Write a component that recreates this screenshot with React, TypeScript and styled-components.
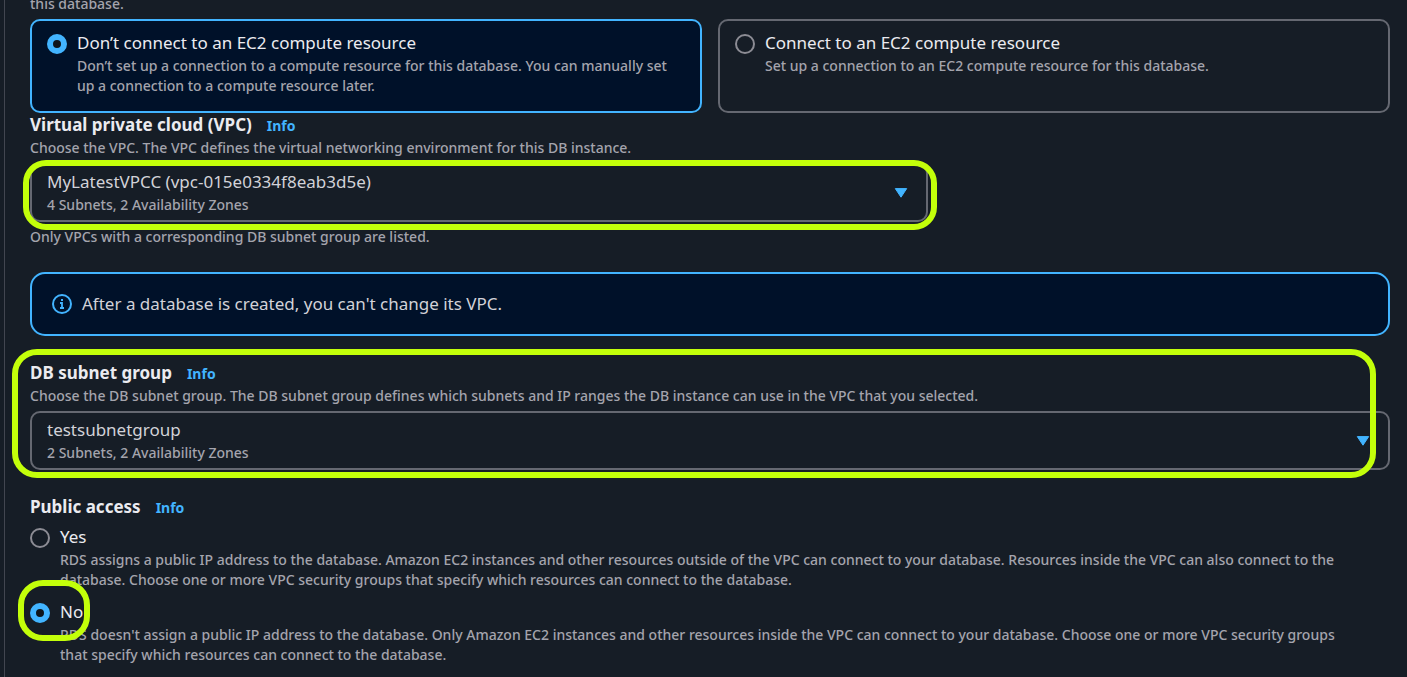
import React, { ReactNode } from "react";
import styled, { createGlobalStyle, css } from "styled-components";

const GlobalStyle = createGlobalStyle`
  *, *::before, *::after { box-sizing: border-box; }
  html, body { margin: 0; min-height: 100%; background: #161d26; }
  body {
    overflow-x: hidden;
    color: #d2d2d8;
    font-family: "Noto Sans", "Open Sans", sans-serif;
    font-size: 17px;
    line-height: 23px;
  }
`;

const Page = styled.div`
  min-height: 100vh;
  padding-left: 4px;
  overflow: hidden;
`;

const Panel = styled.main`
  min-height: 100vh;
  border-left: 1px solid #424650;
  padding: 0 17px 12px 25px;
`;

const Form = styled.form`
  display: flex;
  flex-direction: column;
  gap: 25px;
  margin-top: -6px;
`;

const Note = styled.p`
  display: block;
  margin: 0;
  color: #a4a4ad;
  font-size: 14px;
  font-weight: 500;
  line-height: 20px;
`;

const Constraint = styled(Note)`
  margin-top: 5px;
`;

const Field = styled.section`
  position: relative;
  display: flex;
  flex-direction: column;
`;

const FieldHead = styled.div`
  display: flex;
  align-items: baseline;
  gap: 15px;
  margin-bottom: 2px;
`;

const FieldLabel = styled.label`
  color: #ebebf0;
  font-weight: 700;
`;

const InfoLink = styled.a`
  color: #42b4ff;
  font-size: 14px;
  line-height: 20px;
  font-weight: 700;
  text-decoration: none;
`;

const Tiles = styled.div`
  display: grid;
  grid-template-columns: 1fr 1fr;
  gap: 16px;
  margin-top: 5px;
`;

const Choice = styled.label`
  position: relative;
  display: grid;
  grid-template-columns: 20px 1fr;
  column-gap: 10px;
  align-items: start;
`;

const Tile = styled(Choice)<{ $selected?: boolean }>`
  padding: 10px 15px 15px;
  border: 2px solid ${(p) => (p.$selected ? "#42b4ff" : "#656871")};
  border-radius: 10px;
  background: ${(p) => (p.$selected ? "#001129" : "transparent")};
`;

const ChoiceTitle = styled.span`
  display: block;
  margin-bottom: 2px;
  color: #ebebf0;
`;

const Radio = styled.input`
  appearance: none;
  width: 20px;
  height: 20px;
  margin: 3px 0 0;
  border: 2px solid #8c8c94;
  border-radius: 50%;
  background: transparent;
  &:checked {
    border: 6px solid #42b4ff;
    background: #0f141a;
  }
`;

const SelectBox = styled.div<{ $narrow?: boolean }>`
  position: relative;
  display: grid;
  align-items: center;
  width: ${(p) => (p.$narrow ? "66%" : "100%")};
  margin-top: 5px;
`;

const cell = css`
  grid-area: 1 / 1;
`;

const Select = styled.select`
  ${cell}
  appearance: none;
  width: 100%;
  padding: 5px 45px 27px 15px;
  border: 2px solid #656871;
  border-radius: 10px;
  background: transparent;
  color: inherit;
  font: inherit;
  option { background: #161d26; }
`;

const SelectNote = styled(Note)`
  ${cell}
  align-self: end;
  padding: 0 17px 7px;
  pointer-events: none;
`;

const Caret = styled.svg`
  ${cell}
  justify-self: end;
  width: 14px;
  height: 10px;
  margin-right: 20px;
  pointer-events: none;
`;

const Alert = styled.div`
  display: flex;
  align-items: center;
  gap: 10px;
  min-height: 64px;
  padding: 15px 20px;
  border: 2px solid #42b4ff;
  border-radius: 15px;
  background: #001129;
`;

const AlertText = styled.p`
  margin: 0 0 2px;
`;

const Options = styled.div`
  display: flex;
  flex-direction: column;
  gap: 10px;
  margin-top: 5px;
  padding-right: 30px;
`;

const Marker = styled.span<{ $inset: string; $radius: number }>`
  position: absolute;
  inset: ${(p) => p.$inset};
  border: 6px solid #c3ff0a;
  border-radius: ${(p) => p.$radius}px;
  pointer-events: none;
`;

const ChoiceMarker = styled(Marker)`
  width: 72px;
  height: 61px;
`;

const InfoIcon = () => (
  <svg width="20" height="20" viewBox="0 0 20 20" fill="none" aria-hidden="true">
    <circle cx="10" cy="10" r="9" stroke="#42b4ff" strokeWidth="2" />
    <path d="M8 9h2v5M8 14h4" stroke="#42b4ff" strokeWidth="1.8" />
    <path d="M9 5h2v2H9z" fill="#42b4ff" />
  </svg>
);

type DropdownProps = { id: string; value: string; note: string; narrow?: boolean; children?: ReactNode };

const Dropdown = ({ id, value, note, narrow, children }: DropdownProps) => (
  <SelectBox $narrow={narrow}>
    <Select id={id} aria-describedby={`${id}-note`} defaultValue={value}>
      <option value={value}>{value}</option>
    </Select>
    <SelectNote id={`${id}-note`}>{note}</SelectNote>
    <Caret viewBox="0 0 14 10" aria-hidden="true">
      <path d="M1.3 .6h11.4L7 9.2z" fill="#42b4ff" stroke="#42b4ff" strokeWidth="1" strokeLinejoin="round" />
    </Caret>
    {children}
  </SelectBox>
);

type ChoiceTextProps = { title: string; text: string };

const ChoiceText = ({ title, text }: ChoiceTextProps) => (
  <div>
    <ChoiceTitle>{title}</ChoiceTitle>
    <Note as="span">{text}</Note>
  </div>
);

export default function App() {
  return (
    <Page>
      <GlobalStyle />
      <Panel>
        <Form>
          <div>
            <Note>this database.</Note>
            <Tiles>
              <Tile $selected>
                <Radio type="radio" name="compute" defaultChecked />
                <ChoiceText
                  title="Don’t connect to an EC2 compute resource"
                  text="Don’t set up a connection to a compute resource for this database. You can manually set up a connection to a compute resource later."
                />
              </Tile>
              <Tile>
                <Radio type="radio" name="compute" />
                <ChoiceText
                  title="Connect to an EC2 compute resource"
                  text="Set up a connection to an EC2 compute resource for this database."
                />
              </Tile>
            </Tiles>
            <Field>
              <FieldHead>
                <FieldLabel htmlFor="vpc">Virtual private cloud (VPC)</FieldLabel>
                <InfoLink href="#vpc">Info</InfoLink>
              </FieldHead>
              <Note>Choose the VPC. The VPC defines the virtual networking environment for this DB instance.</Note>
              <Dropdown id="vpc" narrow value="MyLatestVPCC (vpc-015e0334f8eab3d5e)" note="4 Subnets, 2 Availability Zones">
                <Marker $inset="-3px -9px -8px -7px" $radius={23} />
              </Dropdown>
              <Constraint>Only VPCs with a corresponding DB subnet group are listed.</Constraint>
            </Field>
          </div>

          <Alert role="note">
            <InfoIcon />
            <AlertText>After a database is created, you can't change its VPC.</AlertText>
          </Alert>

          <Field>
            <FieldHead>
              <FieldLabel htmlFor="subnet">DB subnet group</FieldLabel>
              <InfoLink href="#subnet">Info</InfoLink>
            </FieldHead>
            <Note>
              Choose the DB subnet group. The DB subnet group defines which subnets and IP ranges the DB instance can use in
              the VPC that you selected.
            </Note>
            <Dropdown id="subnet" value="testsubnetgroup" note="2 Subnets, 2 Availability Zones" />
            <Marker $inset="-12px 14px -8px -18px" $radius={25} />
          </Field>

          <Field role="radiogroup" aria-labelledby="access-label">
            <FieldHead>
              <FieldLabel as="span" id="access-label">Public access</FieldLabel>
              <InfoLink href="#access">Info</InfoLink>
            </FieldHead>
            <Options>
              <Choice>
                <Radio type="radio" name="access" />
                <ChoiceText
                  title="Yes"
                  text="RDS assigns a public IP address to the database. Amazon EC2 instances and other resources outside of the VPC can connect to your database. Resources inside the VPC can also connect to the database. Choose one or more VPC security groups that specify which resources can connect to the database."
                />
              </Choice>
              <Choice>
                <Radio type="radio" name="access" defaultChecked />
                <ChoiceText
                  title="No"
                  text="RDS doesn't assign a public IP address to the database. Only Amazon EC2 instances and other resources inside the VPC can connect to your database. Choose one or more VPC security groups that specify which resources can connect to the database."
                />
                <ChoiceMarker $inset="-20px auto auto -12px" $radius={25} />
              </Choice>
            </Options>
          </Field>
        </Form>
      </Panel>
    </Page>
  );
}
